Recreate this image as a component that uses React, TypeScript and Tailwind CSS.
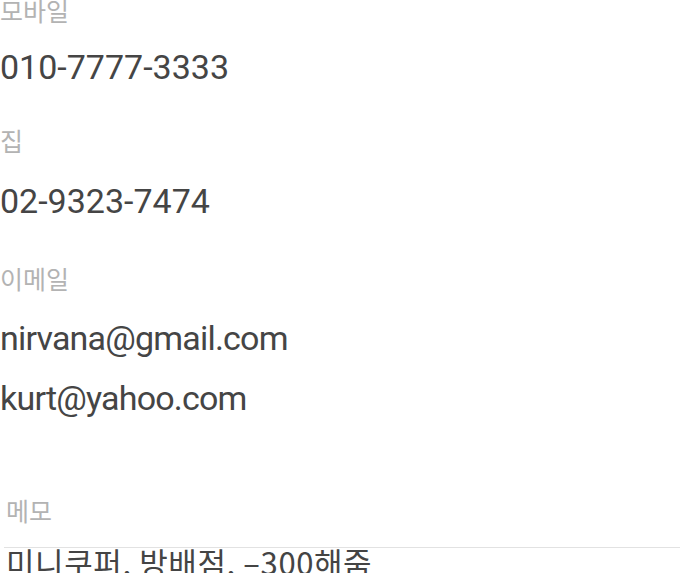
const label = "text-[25px] leading-[30px] h-[30px] text-[#b3b3b3] font-['Noto_Sans_CJK_KR',sans-serif]";
const value = "text-[34px] leading-[60px] h-[60px] text-[#454545] font-['Roboto',sans-serif] whitespace-nowrap";

export default function App() {
  return (
    <main className="w-[680px] h-[573px] overflow-hidden bg-white">
      <div className="-mt-[5px] flex flex-col">
        {/* 모바일 */}
        <div className={label}>모바일</div>
        <div className={`${value} mt-[12px]`}>010-7777-3333</div>

        {/* 집 */}
        <div className={`${label} mt-[28px]`}>집</div>
        <div className={`${value} mt-[16px]`}>02-9323-7474</div>

        {/* 이메일 */}
        <div className={`${label} mt-[32px]`}>이메일</div>
        <div className={`${value} mt-[15px] h-[58px] tracking-[-0.8px]`}>nirvana@gmail.com</div>
        <div className={`${value} tracking-[-0.8px]`}>kurt@yahoo.com</div>

        {/* 메모 */}
        <div className="ml-1 mt-[67px] flex flex-col">
          <div className={`${label} pl-0.5`}>메모</div>
          <div className="mt-[22px] border-t border-[#e2e2e2] pl-0.5 text-[31px] leading-[28px] tracking-[0.6px] text-[#444] font-['Noto_Sans_CJK_KR',sans-serif] whitespace-nowrap">
            미니쿠퍼, 방배점, –300해줌
          </div>
        </div>
      </div>
    </main>
  );
}
